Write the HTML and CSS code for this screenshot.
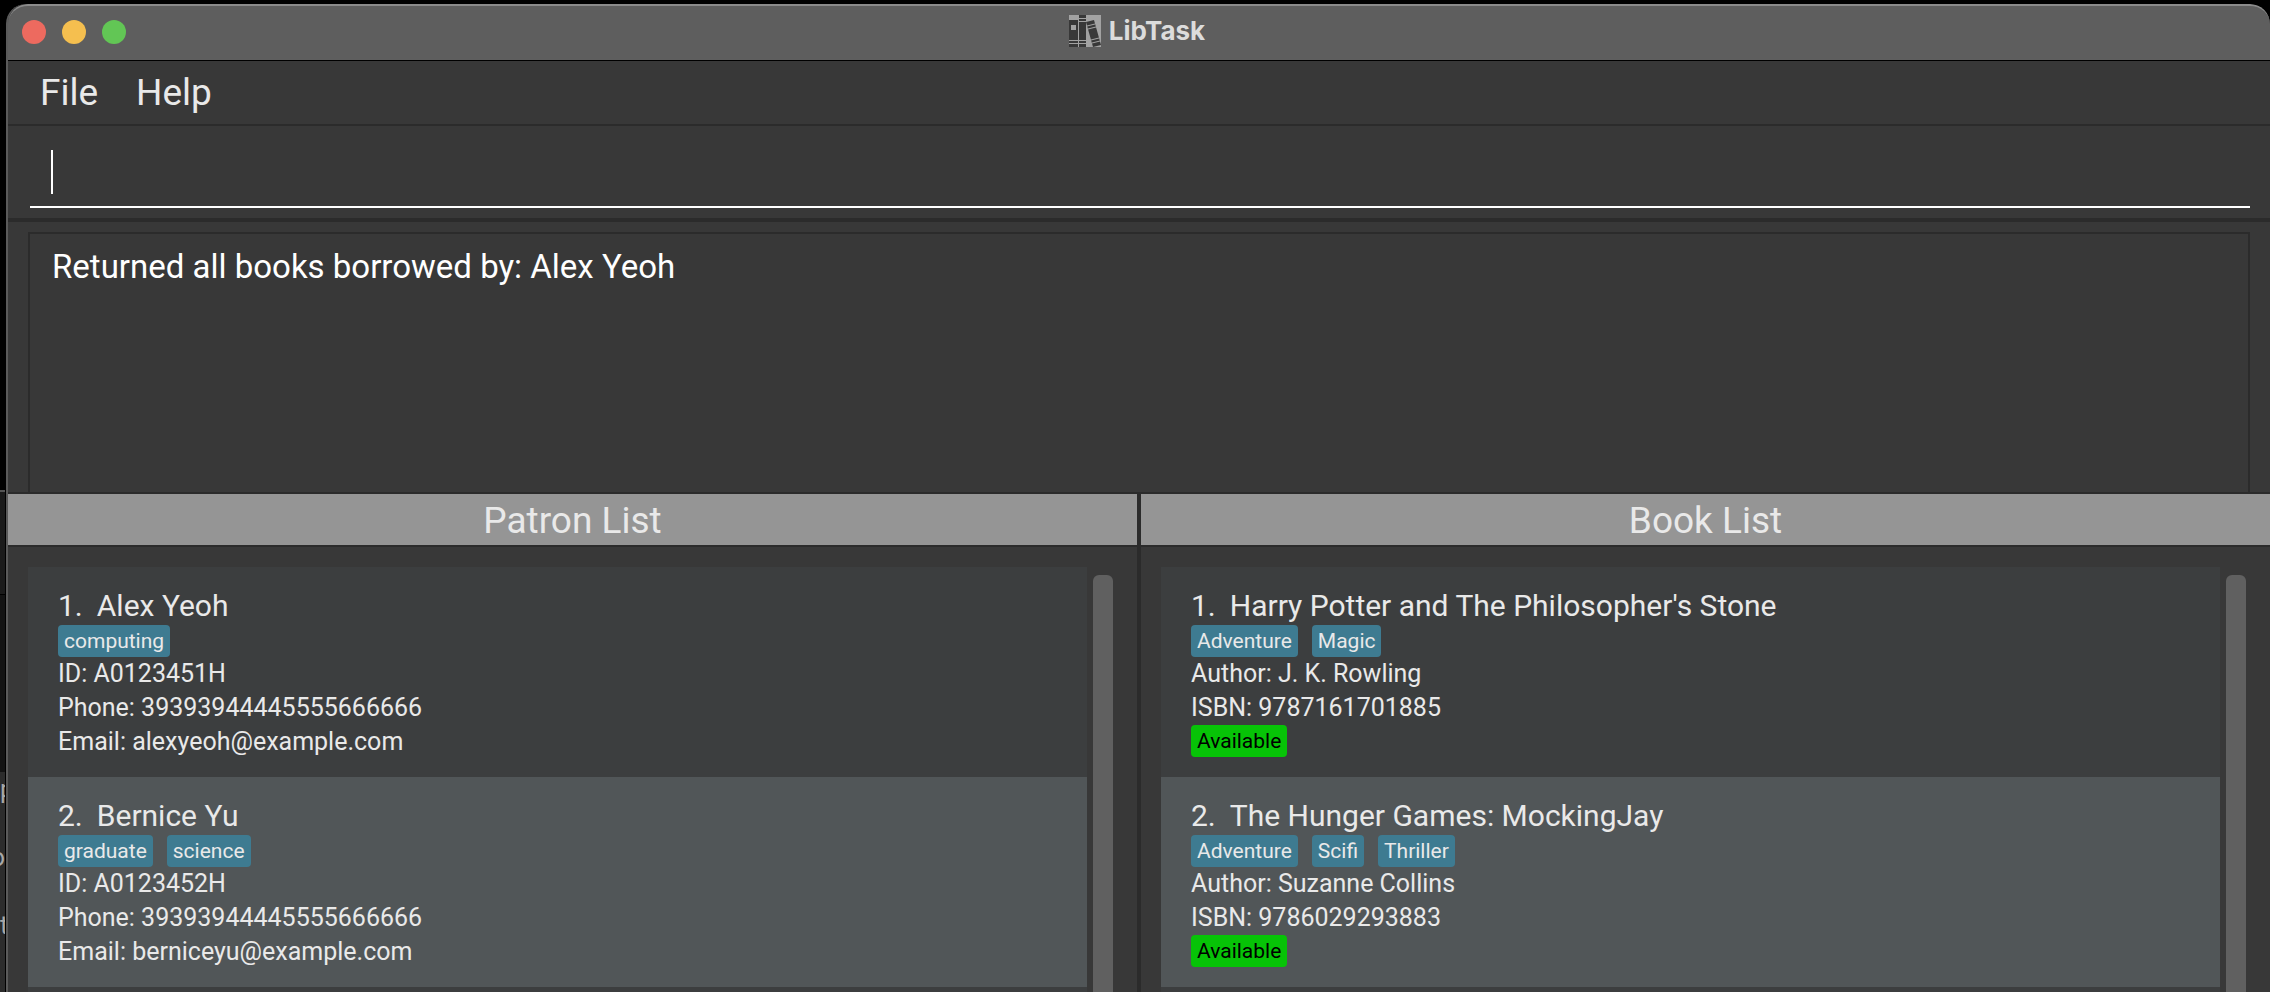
FILE: index.html
```
<!DOCTYPE html>
<html lang="en">
<head>
<meta charset="utf-8">
<title>LibTask</title>
<link rel="stylesheet" href="styles.css">
</head>
<body>
<div class="behind" aria-hidden="true">
  <div class="behind-head"></div>
  <div class="behind-side"></div>
  <div class="behind-text"><span>p</span><span class="clipped">o</span><span>to</span></div>
</div>
<div class="window">
  <header class="titlebar">
    <div class="lights">
      <button class="light close" aria-label="Close"></button>
      <button class="light minimise" aria-label="Minimise"></button>
      <button class="light zoom" aria-label="Zoom"></button>
    </div>
    <h1 class="title">
      <svg class="logo" viewBox="0 0 32 32" aria-hidden="true">
        <rect width="32" height="32" fill="#a2a2a2"/>
        <path fill="#383838" d="M0 5h9v27H0zM10 0h7v32h-7zM17 7l8-2 7 25-8 2z"/>
        <path fill="#a2a2a2" d="M2 10h5v5H2z"/>
        <path stroke="#a2a2a2" stroke-width="1" fill="none" d="M0 25.500h9M0 28.500h9M10 3.500h7M10 6.500h7M10 25.500h7M10 28.500h7M18 11l8-2M19 14l8-2M22 25l8-2M23 28l8-2"/>
      </svg>
      <span>LibTask</span>
    </h1>
  </header>
  <nav class="menubar">
    <button class="menu">File</button>
    <button class="menu">Help</button>
  </nav>
  <div class="command">
    <input class="command-box" type="text" aria-label="Command">
    <span class="caret"></span>
  </div>
  <div class="result">
    <output class="result-box">Returned all books borrowed by: Alex Yeoh</output>
  </div>
  <main class="panes">
    <section class="pane">
      <h2 class="pane-title">Patron List</h2>
      <div class="pane-body">
        <ol class="list">
          <li class="card">
            <h3 class="name"><span>1.</span><span>Alex Yeoh</span></h3>
            <div class="tags"><span class="tag">computing</span></div>
            <p>ID: A0123451H</p>
            <p>Phone: 39393944445555666666</p>
            <p>Email: alexyeoh@example.com</p>
          </li>
          <li class="card">
            <h3 class="name"><span>2.</span><span>Bernice Yu</span></h3>
            <div class="tags"><span class="tag">graduate</span><span class="tag">science</span></div>
            <p>ID: A0123452H</p>
            <p>Phone: 39393944445555666666</p>
            <p>Email: berniceyu@example.com</p>
          </li>
          <li class="card"></li>
        </ol>
        <div class="scroll"></div>
      </div>
    </section>
    <section class="pane">
      <h2 class="pane-title">Book List</h2>
      <div class="pane-body">
        <ol class="list">
          <li class="card">
            <h3 class="name"><span>1.</span><span>Harry Potter and The Philosopher's Stone</span></h3>
            <div class="tags"><span class="tag">Adventure</span><span class="tag">Magic</span></div>
            <p>Author: J. K. Rowling</p>
            <p>ISBN: 9787161701885</p>
            <div class="tags"><span class="tag available">Available</span></div>
          </li>
          <li class="card">
            <h3 class="name"><span>2.</span><span>The Hunger Games: MockingJay</span></h3>
            <div class="tags"><span class="tag">Adventure</span><span class="tag">Scifi</span><span class="tag">Thriller</span></div>
            <p>Author: Suzanne Collins</p>
            <p>ISBN: 9786029293883</p>
            <div class="tags"><span class="tag available">Available</span></div>
          </li>
          <li class="card"></li>
        </ol>
        <div class="scroll"></div>
      </div>
    </section>
  </main>
</div>
</body>
</html>
```
FILE: styles.css
```
* { box-sizing: border-box; }
html, body { height: 100%; }
body {
  margin: 0;
  padding: 4px 0 0 6px;
  overflow: hidden;
  background: #000;
  color: #e9e9e9;
  font-family: Roboto, "Liberation Sans", sans-serif;
  font-size: 25px;
}
h1, h2, h3, p, ol { margin: 0; padding: 0; font-weight: 400; }
ol { list-style: none; }
button { border: 0; padding: 0; background: none; color: inherit; font: inherit; }

.behind {
  position: absolute;
  left: 0;
  top: 490px;
  bottom: 0;
  width: 5px;
  overflow: hidden;
  background: #2c2c2c;
  color: #a8a8a8;
}
.behind-head { height: 105px; background: #1b1b1b; border-top: 2px solid #555; border-bottom: 1px solid #000; }
.behind-side { height: 177px; background: #131313; }
.behind-text { display: flex; flex-direction: column; align-items: flex-start; line-height: 68px; margin-top: -16px; }
.clipped { align-self: flex-end; }

.window {
  display: flex;
  flex-direction: column;
  height: 100%;
  border-left: 2px solid #5a5a5a;
  border-radius: 20px 20px 0 0;
  overflow: hidden;
  background: #383838;
}
.titlebar {
  display: grid;
  grid-template-columns: 1fr auto 1fr;
  align-items: center;
  flex: none;
  height: 57px;
  padding: 0 18px 2px 14px;
  border-top: 2px solid #8b8b8b;
  border-bottom: 1px solid #000;
  border-radius: 20px 20px 0 0;
  background: #5e5e5e;
}
.lights { display: flex; gap: 16px; }
.light { width: 24px; height: 24px; border-radius: 50%; }
.close { background: #ed6a5f; }
.minimise { background: #f5bf4f; }
.zoom { background: #62c655; }
.title {
  display: flex;
  align-items: center;
  gap: 8px;
  padding-bottom: 3px;
  color: #dcdcdc;
  font-family: Inter, "Liberation Sans", sans-serif;
  font-size: 26px;
  font-weight: 700;
  line-height: 32px;
}
.logo { width: 32px; height: 32px; }

.menubar {
  display: flex;
  flex: none;
  gap: 38px;
  height: 65px;
  padding: 0 32px;
  border-bottom: 2px solid #2b2b2b;
  font-size: 37px;
}
.command {
  position: relative;
  flex: none;
  height: 96px;
  padding: 12px 20px 10px 22px;
  border-bottom: 4px solid #2b2b2b;
}
.command-box {
  display: block;
  width: 100%;
  height: 70px;
  padding: 0 20px;
  border: 0;
  border-bottom: 2px solid #fff;
  outline: 0;
  background: transparent;
  color: #fff;
  font: inherit;
  font-size: 33px;
}
.caret { position: absolute; left: 43px; top: 24px; width: 2px; height: 44px; background: #fff; }
.result { flex: none; height: 270px; padding: 10px 20px 0; }
.result-box {
  display: block;
  height: 100%;
  padding: 12px 22px;
  border: 2px solid #2b2b2b;
  border-bottom: 0;
  color: #fff;
  font-size: 33px;
  line-height: 42px;
}

.panes { display: flex; flex: 1; gap: 4px; min-height: 0; background: #2b2b2b; }
.pane { display: flex; flex: 1; flex-direction: column; min-width: 0; background: #383838; }
.pane-title {
  flex: none;
  height: 55px;
  border: 2px solid #2b2b2b;
  border-width: 2px 0;
  background: #959595;
  font-size: 37px;
  line-height: 53px;
  text-align: center;
}
.pane-body { display: flex; flex: 1; gap: 6px; min-height: 0; padding: 20px 24px 0 20px; }
.list { flex: 1; overflow: hidden; }
.scroll { width: 20px; margin-top: 8px; border-radius: 6px 6px 0 0; background: #606060; }
.card { height: 210px; padding: 20px 30px; background: #3c3e3f; line-height: 34px; }
.card:nth-child(even) { background: #515658; }
.name { display: flex; gap: 14px; font-size: 30px; line-height: 38px; }
.tags { display: flex; gap: 14px; height: 32px; }
.tag {
  padding: 1px 6px 0;
  border-radius: 4px;
  background: #3e7b91;
  font-size: 21px;
  line-height: 31px;
}
.available { background: #07c307; color: #000; }
```
